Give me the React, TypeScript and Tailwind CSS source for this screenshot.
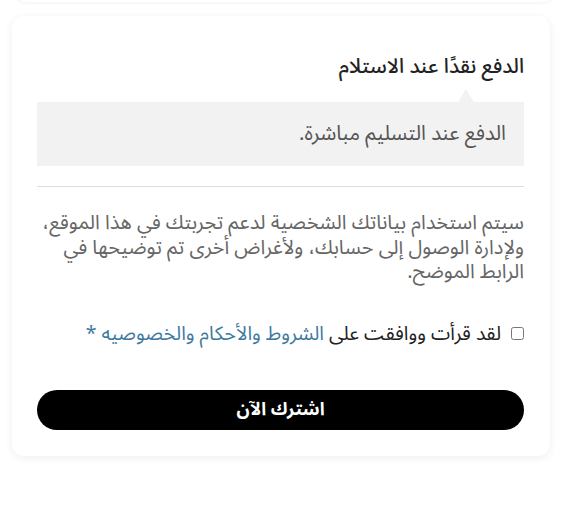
import React from "react";

export default function App() {
  return (
    <div dir="rtl" className="w-[575px] h-[507px] bg-white relative overflow-hidden" style={{ fontFamily: '"Noto Sans Arabic", "Noto Sans", "DejaVu Sans", sans-serif' }}>
      <div className="absolute left-[15px] right-[20px] top-[-10px] h-[12px] rounded-b-xl shadow-[0_1px_4px_rgba(0,0,0,0.06)]" />
      <div className="pt-[16px] mr-[25px] w-[538px]">
        <div className="bg-white rounded-xl shadow-[0_2px_8px_rgba(0,0,0,0.07)] pr-[26px] pl-[25px] pt-[36px] pb-[26px]">
          <h3 className="text-[20.5px] font-medium text-[#222] leading-[30px]">الدفع نقدًا عند الاستلام</h3>
          <div className="relative mt-[20px] bg-[#f2f2f2] h-[64px] flex items-center px-[18px]">
            <div className="absolute top-[-13px] right-[50px] w-0 h-0 border-l-[8px] border-r-[8px] border-b-[13px] border-l-transparent border-r-transparent border-b-[#f2f2f2]" />
            <p className="text-[20.5px] text-[#555]">الدفع عند التسليم مباشرة.</p>
          </div>
          <div className="mt-[20px] h-px bg-[#ddd]" />
          <p className="mt-[24px] text-[20px] leading-[24.5px] text-[#666]">
            سيتم استخدام بياناتك الشخصية لدعم تجربتك في هذا الموقع، ولإدارة الوصول إلى حسابك، ولأغراض أخرى تم توضيحها في الرابط الموضح.
          </p>
          <label className="mt-[34px] flex items-center gap-[10px] text-[19.5px] text-[#222]">
            <input type="checkbox" className="w-[13px] h-[13px]" />
            <span>
              لقد قرأت ووافقت على <span className="text-[#3d7aa0]">الشروط والأحكام والخصوصيه</span> <span className="text-[#3d7aa0]">*</span>
            </span>
          </label>
          <button className="mt-[42px] w-full h-[40px] rounded-full bg-black text-white font-bold text-[18px]">اشترك الآن</button>
        </div>
      </div>
    </div>
  );
}
